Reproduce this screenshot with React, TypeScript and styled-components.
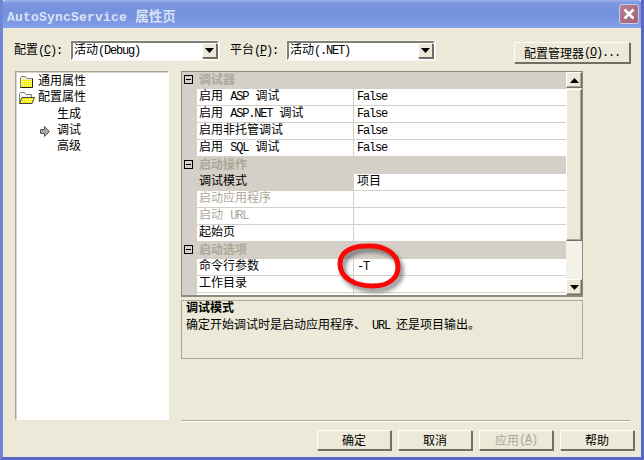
import styled, { createGlobalStyle } from "styled-components";

const GlobalStyle = createGlobalStyle`
  html, body {
    margin: 0;
    padding: 0;
    background: #ece9d8;
  }
  body {
    font-family: "Liberation Mono", "Noto Sans CJK SC", monospace;
    font-size: 12px;
    color: #000;
  }
`;

type RowData = {
  name: React.ReactNode;
  value?: React.ReactNode;
  disabled?: boolean;
  selected?: boolean;
};

type GroupData = { title: string; rows: RowData[] };

const groups: GroupData[] = [
  {
    title: "调试器",
    rows: [
      { name: <>启用 <Latin>ASP</Latin> 调试</>, value: <Latin>False</Latin> },
      { name: <>启用 <Latin>ASP.NET</Latin> 调试</>, value: <Latin>False</Latin> },
      { name: "启用非托管调试", value: <Latin>False</Latin> },
      { name: <>启用 <Latin>SQL</Latin> 调试</>, value: <Latin>False</Latin> },
    ],
  },
  {
    title: "启动操作",
    rows: [
      { name: "调试模式", value: "项目", selected: true },
      { name: "启动应用程序", disabled: true },
      { name: <>启动 <Latin>URL</Latin></>, disabled: true },
      { name: "起始页" },
    ],
  },
  {
    title: "启动选项",
    rows: [
      { name: "命令行参数", value: <Latin>-T</Latin> },
      { name: "工作目录" },
    ],
  },
];

const App = () => {
  return (
    <Window>
      <GlobalStyle />
      <TitleBar>
        <TitleText>
          <TitleLatin>AutoSyncService</TitleLatin> 属性页
        </TitleText>
        <CloseButton>
          <svg width="14" height="14" viewBox="0 0 14 14">
            <path d="M2.5 2.5 L11.5 11.5 M11.5 2.5 L2.5 11.5" stroke="#fff" strokeWidth="2.6" fill="none" />
          </svg>
        </CloseButton>
      </TitleBar>

      <Body>
        <ConfigRow>
          <ConfigLabel>配置<Latin>(<u>C</u>):</Latin></ConfigLabel>
          <Combo>
            <ComboValue>活动<Latin>(Debug)</Latin></ComboValue>
            <ComboButton><DownArrow /></ComboButton>
          </Combo>
          <PlatformLabel>平台<Latin>(<u>P</u>):</Latin></PlatformLabel>
          <Combo>
            <ComboValue>活动<Latin>(.NET)</Latin></ComboValue>
            <ComboButton><DownArrow /></ComboButton>
          </Combo>
          <ManagerButton>配置管理器<Latin> (<u>O</u>)...</Latin></ManagerButton>
        </ConfigRow>

        <Main>
          <Tree>
            <TreeRow>
              <FolderClosed />
              通用属性
            </TreeRow>
            <TreeRow>
              <FolderOpen />
              配置属性
            </TreeRow>
            <TreeLeaf>生成</TreeLeaf>
            <TreeLeaf>
              <LeafArrow />
              调试
            </TreeLeaf>
            <TreeLeaf>高级</TreeLeaf>
          </Tree>

          <RightColumn>
            <Grid>
              <GridRows>
                {groups.map((group) => (
                  <div key={group.title}>
                    <GroupHeader>
                      <Toggle />
                      <GroupTitle>{group.title}</GroupTitle>
                    </GroupHeader>
                    {group.rows.map((row, i) => (
                      <Row key={i}>
                        <NameCell $disabled={row.disabled} $selected={row.selected}>
                          {row.name}
                        </NameCell>
                        <ValueCell>{row.value}</ValueCell>
                      </Row>
                    ))}
                  </div>
                ))}
                <Row>
                  <NameCell />
                  <ValueCell />
                </Row>
              </GridRows>
              <ScrollBar>
                <ScrollButton>
                  <svg width="9" height="5" viewBox="0 0 9 5"><path d="M4.5 0 L9 5 L0 5 Z" fill="#000" /></svg>
                </ScrollButton>
                <Thumb />
                <Track />
                <ScrollButton>
                  <svg width="9" height="5" viewBox="0 0 9 5"><path d="M0 0 L9 0 L4.5 5 Z" fill="#000" /></svg>
                </ScrollButton>
              </ScrollBar>
              <RedCircle width="76" height="62" viewBox="0 0 76 62">
                <defs>
                  <filter id="soft" x="-20%" y="-20%" width="140%" height="140%">
                    <feGaussianBlur stdDeviation="2" />
                  </filter>
                </defs>
                <path
                  d={ringPath}
                  transform="translate(3 4)"
                  fill="none"
                  stroke="#444"
                  strokeOpacity="0.65"
                  strokeWidth="5"
                  filter="url(#soft)"
                />
                <path d={ringPath} fill="none" stroke="#fb0606" strokeWidth="5" />
              </RedCircle>
            </Grid>

            <Description>
              <DescTitle>调试模式</DescTitle>
              <div>确定开始调试时是启动应用程序、<Latin> URL </Latin>还是项目输出。</div>
            </Description>
          </RightColumn>
        </Main>

        <Separator />

        <ButtonRow>
          <DialogButton>确定</DialogButton>
          <DialogButton>取消</DialogButton>
          <DialogButton $disabled>应用<Latin> (<u>A</u>)</Latin></DialogButton>
          <DialogButton>帮助</DialogButton>
        </ButtonRow>
      </Body>
    </Window>
  );
};

export default App;

const ringPath = "M30 6 C18 6 3 10 3 24 C3 38 18 46 36 46 C52 46 61 38 61 27 C61 14 48 5 30 6 Z";

function DownArrow() {
  return (
    <svg width="9" height="5" viewBox="0 0 9 5">
      <path d="M0 0 L9 0 L4.5 5 Z" fill="#000" />
    </svg>
  );
}

function DitherPattern({ id }: { id: string }) {
  return (
    <pattern id={id} width="2" height="2" patternUnits="userSpaceOnUse">
      <rect width="2" height="2" fill="#f6f000" />
      <rect width="1" height="1" fill="#fffde0" />
    </pattern>
  );
}

function FolderClosed() {
  return (
    <FolderIcon width="16" height="14" viewBox="0 0 16 14">
      <defs><DitherPattern id="ditherClosed" /></defs>
      <path d="M1.5 12.5 V2.5 L2.5 1.5 H6.5 L8 3.5 H13.5 V12.5 Z" fill="#f3eec0" stroke="#808080" />
      <path d="M2 5 H13 V12 H2 Z" fill="url(#ditherClosed)" />
      <path d="M1.5 12.5 H13.5 M13.5 3.5 V12.5" stroke="#222" />
    </FolderIcon>
  );
}

function FolderOpen() {
  return (
    <FolderIcon width="16" height="14" viewBox="0 0 16 14">
      <defs><DitherPattern id="ditherOpen" /></defs>
      <path d="M0.5 12.5 V2.5 L1.5 1.5 H5.5 L7 3.5 H12.5 V6" fill="#f4f2ea" stroke="#808080" />
      <path d="M0.5 12.5 L3 6.5 H15.5 L13 12.5 Z" fill="url(#ditherOpen)" stroke="#444" />
    </FolderIcon>
  );
}

function LeafArrow() {
  return (
    <LeafArrowIcon width="10" height="11" viewBox="0 0 10 11">
      <path d="M0.5 3.5 H4.5 V0.5 L9.5 5.5 L4.5 10.5 V7.5 H0.5 Z" fill="#a8a8a8" stroke="#555" strokeWidth="1" />
    </LeafArrowIcon>
  );
}

function Latin({ children }: { children: React.ReactNode }) {
  return <LatinText>{children}</LatinText>;
}

const LatinText = styled.span`
  font-family: "Liberation Mono", monospace;
  font-size: 12px;
  letter-spacing: -1.2px;
`;

const Window = styled.div`
  width: 644px;
  height: 460px;
  box-sizing: border-box;
  display: flex;
  flex-direction: column;
  background: #ece9d8;
  border-left: 3px solid #6f86d6;
  border-right: 3px solid #5a68c4;
  border-bottom: 3px solid #5a68c4;
  overflow: hidden;
`;

const TitleBar = styled.div`
  height: 28px;
  margin: 0 -3px;
  padding: 2px 5px 0 7px;
  box-sizing: border-box;
  flex: none;
  display: flex;
  align-items: center;
  justify-content: space-between;
  border-radius: 7px 7px 0 0;
  background: linear-gradient(180deg, #9ab0ea 0%, #7b96e0 12%, #7590dc 55%, #7e9ae6 85%, #86a4ee 100%);
`;

const TitleText = styled.div`
  font-weight: bold;
  font-size: 13.5px;
  color: #d8e2f8;
`;

const TitleLatin = styled.span`
  font-family: "Liberation Mono", monospace;
  font-size: 13px;
  letter-spacing: 0.2px;
`;

const CloseButton = styled.div`
  width: 20px;
  height: 20px;
  margin-top: -2px;
  box-sizing: border-box;
  display: flex;
  align-items: center;
  justify-content: center;
  border: 1px solid #c8cee8;
  border-radius: 3px;
  background: linear-gradient(135deg, #b87f9a, #a0606f);
`;

const Body = styled.div`
  flex: 1;
  min-height: 0;
  display: flex;
  flex-direction: column;
  padding: 0 7px 0 11px;
`;

const ConfigRow = styled.div`
  height: 43px;
  flex: none;
  padding-top: 13px;
  box-sizing: border-box;
  display: flex;
  align-items: flex-start;
`;

const ConfigLabel = styled.div`
  width: 57px;
  line-height: 21px;
  white-space: pre;
`;

const PlatformLabel = styled(ConfigLabel)`
  margin-left: 11px;
`;

const Combo = styled.div`
  width: 148px;
  height: 19px;
  box-sizing: border-box;
  display: flex;
  align-items: center;
  background: #fff;
  border: 2px solid;
  border-color: #808076 #fff #fff #808076;
  box-shadow: 0 0 0 1px #f6f4ec;
`;

const ComboValue = styled.div`
  flex: 1;
  padding: 1px 0 0 1px;
  line-height: 15px;
`;

const RaisedButton = styled.div`
  box-sizing: border-box;
  background: #ece9d8;
  border: 1px solid;
  border-color: #fff #716f64 #716f64 #fff;
  box-shadow: 1px 1px 0 #716f64;
`;

const ComboButton = styled(RaisedButton)`
  width: 15px;
  height: 15px;
  display: flex;
  align-items: center;
  justify-content: center;
`;

const ManagerButton = styled(RaisedButton)`
  width: 116px;
  height: 21px;
  margin: 1px 0 0 79px;
  display: flex;
  align-items: center;
  justify-content: center;
`;

const Main = styled.div`
  height: 349px;
  flex: none;
  display: flex;
  gap: 12px;
`;

const Tree = styled.div`
  width: 154px;
  height: 349px;
  margin-left: 1px;
  padding: 2px 0 0 3px;
  box-sizing: border-box;
  background: #fff;
  border: 1px solid;
  border-color: #a6a49a #fff #fff #a6a49a;
  box-shadow: inset 1px 1px 0 #d8d5c6;
`;

const TreeRow = styled.div`
  height: 16.25px;
  display: flex;
  align-items: center;
  gap: 3px;
  line-height: 16px;
`;

const TreeLeaf = styled(TreeRow)`
  position: relative;
  padding-left: 38px;
`;

const FolderIcon = styled.svg`
  flex: none;
`;

const LeafArrowIcon = styled.svg`
  position: absolute;
  left: 21px;
  top: 3px;
`;

const RightColumn = styled.div`
  width: 402px;
  display: flex;
  flex-direction: column;
  gap: 3px;
`;

const Grid = styled.div`
  position: relative;
  height: 226px;
  box-sizing: border-box;
  display: flex;
  overflow: hidden;
  background: #d4d0c8;
  border: 1px solid #8e8c80;
  border-bottom-width: 2px;
`;

const GridRows = styled.div`
  flex: 1;
  min-width: 0;
  overflow: hidden;
`;

const GroupHeader = styled.div`
  height: 17px;
  padding-bottom: 3px;
  box-sizing: border-box;
  display: flex;
  align-items: center;
  background: #d4d0c8;
`;

const Toggle = styled.span`
  position: relative;
  width: 9px;
  height: 9px;
  margin-left: 2px;
  box-sizing: border-box;
  border: 1px solid #000;

  &::after {
    content: "";
    position: absolute;
    left: 1px;
    top: 3px;
    width: 5px;
    height: 1px;
    background: #000;
  }
`;

const GroupTitle = styled.span`
  margin-left: 6px;
  font-weight: bold;
  color: #aca899;
`;

const Row = styled.div`
  height: 17px;
  margin-left: 15px;
  box-sizing: border-box;
  display: flex;
  background: #fff;
  border-bottom: 1px solid #d4d0c8;
`;

const NameCell = styled.div<{ $disabled?: boolean; $selected?: boolean }>`
  width: 156px;
  padding-left: 2px;
  box-sizing: border-box;
  line-height: 16px;
  white-space: pre;
  color: ${(p) => (p.$disabled ? "#aca899" : "#000")};
  background: ${(p) => (p.$selected ? "#d4d0c8" : "transparent")};
`;

const ValueCell = styled.div`
  flex: 1;
  padding-left: 3px;
  line-height: 17px;
  border-left: 1px solid #d4d0c8;
`;

const ScrollBar = styled.div`
  width: 16px;
  flex: none;
  display: flex;
  flex-direction: column;
  background: #ece9d8;
`;

const ScrollButton = styled(RaisedButton)`
  height: 16px;
  flex: none;
  display: flex;
  align-items: center;
  justify-content: center;
  box-shadow: inset -1px -1px 0 #aca899;
`;

const Thumb = styled(RaisedButton)`
  height: 152px;
  margin-top: 1px;
  flex: none;
  box-shadow: inset -1px -1px 0 #aca899;
`;

const Track = styled.div`
  flex: 1;
  background-color: #fbfaf6;
  background-image: repeating-conic-gradient(#ece9d8 0 25%, #fbfaf6 0 50%);
  background-size: 2px 2px;
`;

const RedCircle = styled.svg`
  position: absolute;
  left: 155px;
  top: 168px;
  pointer-events: none;
`;

const Description = styled.div`
  height: 59px;
  padding: 0 4px;
  box-sizing: border-box;
  line-height: 16px;
  border: 1px solid #aca899;
`;

const DescTitle = styled.div`
  font-weight: bold;
  margin-bottom: 1px;
`;

const Separator = styled.div`
  width: 449px;
  height: 1px;
  margin-left: 167px;
  flex: none;
  background: #aca899;
  box-shadow: 0 1px 0 #fff;
`;

const ButtonRow = styled.div`
  margin-top: 9px;
  display: flex;
  justify-content: flex-end;
  gap: 7px;
`;

const DialogButton = styled(RaisedButton)<{ $disabled?: boolean }>`
  width: 74px;
  height: 20px;
  display: flex;
  align-items: center;
  justify-content: center;
  color: ${(p) => (p.$disabled ? "#aca899" : "#000")};
`;
